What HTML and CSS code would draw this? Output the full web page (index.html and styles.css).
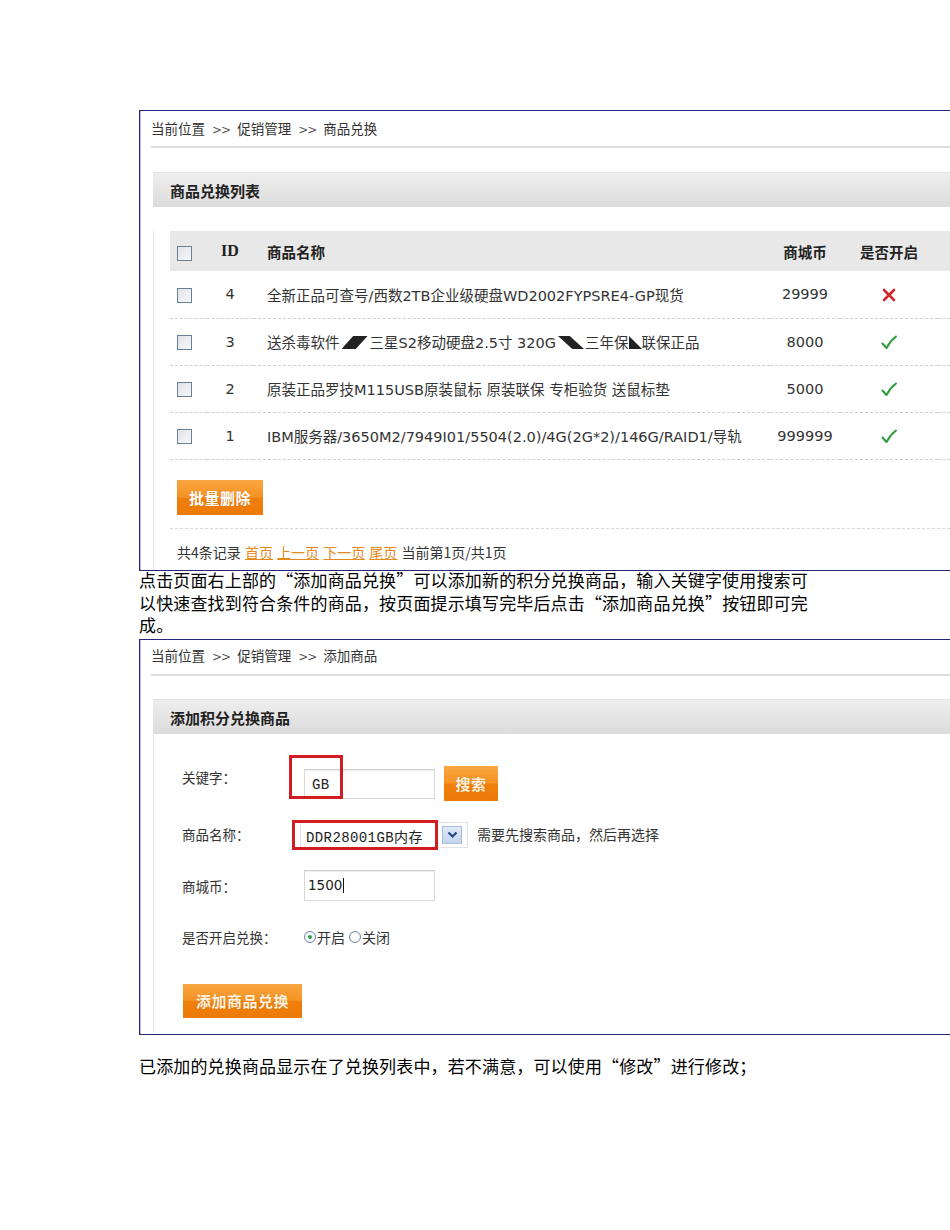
FILE: index.html
```html
<!DOCTYPE html>
<html lang="zh-CN">
<head>
<meta charset="utf-8">
<title>商品兑换</title>
<link rel="stylesheet" href="styles.css">
</head>
<body>
<div class="page">
  <section class="shot shot-list">
    <div class="crumb">当前位置 <span class="sep">&gt;&gt;</span> 促销管理 <span class="sep">&gt;&gt;</span> 商品兑换</div>
    <div class="panel">
      <div class="panel-head">商品兑换列表</div>
      <div class="panel-body">
        <table class="grid">
          <thead>
            <tr>
              <th class="c-chk"><span class="chk"></span></th>
              <th class="c-id id-head">ID</th>
              <th class="c-name">商品名称</th>
              <th class="c-coin">商城币</th>
              <th class="c-on">是否开启</th>
              <th class="c-more"></th>
            </tr>
          </thead>
          <tbody>
            <tr>
              <td class="c-chk"><span class="chk"></span></td>
              <td class="c-id">4</td>
              <td class="c-name">全新正品可查号/西数2TB企业级硬盘WD2002FYPSRE4-GP现货</td>
              <td class="c-coin">29999</td>
              <td class="c-on"><svg class="ico" width="14" height="14" viewBox="0 0 14 14"><path d="M2 2 L12 12 M12 2 L2 12" stroke="#d4262a" stroke-width="2.6" stroke-linecap="round"/></svg></td>
              <td class="c-more"></td>
            </tr>
            <tr>
              <td class="c-chk"><span class="chk"></span></td>
              <td class="c-id">3</td>
              <td class="c-name">送杀毒软件<span class="tri tri-a"></span>三星S2移动硬盘2.5寸 320G<span class="tri tri-b"></span>三年保<span class="tri tri-c"></span>联保正品</td>
              <td class="c-coin">8000</td>
              <td class="c-on"><svg class="ico" width="16" height="15" viewBox="0 0 16 15"><path d="M1.5 8.5 L5.5 13 C8 8 11 4.5 15 1.5" fill="none" stroke="#2f9a3e" stroke-width="2" stroke-linecap="round" stroke-linejoin="round"/></svg></td>
              <td class="c-more"></td>
            </tr>
            <tr>
              <td class="c-chk"><span class="chk"></span></td>
              <td class="c-id">2</td>
              <td class="c-name">原装正品罗技M115USB原装鼠标 原装联保 专柜验货 送鼠标垫</td>
              <td class="c-coin">5000</td>
              <td class="c-on"><svg class="ico" width="16" height="15" viewBox="0 0 16 15"><path d="M1.5 8.5 L5.5 13 C8 8 11 4.5 15 1.5" fill="none" stroke="#2f9a3e" stroke-width="2" stroke-linecap="round" stroke-linejoin="round"/></svg></td>
              <td class="c-more"></td>
            </tr>
            <tr>
              <td class="c-chk"><span class="chk"></span></td>
              <td class="c-id">1</td>
              <td class="c-name">IBM服务器/3650M2/7949I01/5504(2.0)/4G(2G*2)/146G/RAID1/导轨</td>
              <td class="c-coin">999999</td>
              <td class="c-on"><svg class="ico" width="16" height="15" viewBox="0 0 16 15"><path d="M1.5 8.5 L5.5 13 C8 8 11 4.5 15 1.5" fill="none" stroke="#2f9a3e" stroke-width="2" stroke-linecap="round" stroke-linejoin="round"/></svg></td>
              <td class="c-more"></td>
            </tr>
          </tbody>
        </table>
        <div class="actions"><span class="btn btn-del">批量删除</span></div>
        <div class="pager">共4条记录 <a class="plink">首页</a> <a class="plink">上一页</a> <a class="plink">下一页</a> <a class="plink">尾页</a> 当前第1页/共1页</div>
      </div>
    </div>
  </section>

  <p class="note">点击页面右上部的<span class="q">“</span>添加商品兑换<span class="q">”</span>可以添加新的积分兑换商品，输入关键字使用搜索可<br>以快速查找到符合条件的商品，按页面提示填写完毕后点击<span class="q">“</span>添加商品兑换<span class="q">”</span>按钮即可完<br>成。</p>

  <section class="shot shot-form">
    <div class="crumb crumb-2">当前位置 <span class="sep">&gt;&gt;</span> 促销管理 <span class="sep">&gt;&gt;</span> 添加商品</div>
    <div class="panel panel-2">
      <div class="panel-head">添加积分兑换商品</div>
      <div class="panel-body form-body">
        <div class="frow frow-1">
          <div class="flabel">关键字：</div>
          <div class="field field-kw">
            <span class="val val-mono">GB</span>
            <span class="hl hl-kw"></span>
          </div>
          <span class="btn btn-search">搜索</span>
        </div>
        <div class="frow frow-2">
          <div class="flabel">商品名称：</div>
          <div class="select">
            <span class="val val-mono">DDR28001GB内存</span>
            <span class="arrow"><svg width="11" height="8" viewBox="0 0 11 8"><path d="M1.5 1.5 L5.5 5.5 L9.5 1.5" fill="none" stroke="#23468a" stroke-width="2.2"/></svg></span>
            <span class="hl hl-sel"></span>
          </div>
          <div class="hint">需要先搜索商品，然后再选择</div>
        </div>
        <div class="frow frow-3">
          <div class="flabel">商城币：</div>
          <div class="field field-coin"><span class="val">1500</span><span class="caret"></span></div>
        </div>
        <div class="frow frow-4">
          <div class="flabel">是否开启兑换：</div>
          <div class="radios">
            <span class="radio on"></span><span class="rtext">开启</span>
            <span class="radio"></span><span class="rtext">关闭</span>
          </div>
        </div>
        <span class="btn btn-add">添加商品兑换</span>
      </div>
    </div>
  </section>

  <p class="note note-2">已添加的兑换商品显示在了兑换列表中，若不满意，可以使用<span class="q">“</span>修改<span class="q">”</span>进行修改；</p>
</div>
</body>
</html>
```

FILE: styles.css
```css
* { box-sizing: border-box; }
html, body { margin: 0; padding: 0; background: #fff; }
body {
  width: 950px;
  overflow: hidden;
  font-family: "Noto Sans CJK SC", sans-serif;
  color: #000;
}
.page {
  padding: 110px 0 0 139px;
}

/* screenshot boxes */
.shot {
  width: 811px;
  border: 1px solid #25257e;
  border-right: none;
  background: #fff;
  overflow: hidden;
  box-shadow: inset 1px 0 0 #b9b9e6;
}
.shot-list { height: 461px; }
.shot-form { height: 396px; }

.crumb {
  margin-left: 11px;
  height: 37px;
  line-height: 34px;
  border-bottom: 2px solid #dedede;
  font-size: 13.5px;
  color: #333;
  white-space: nowrap;
}
.crumb .sep {
  display: inline-block;
  margin: 0 4px;
  font-family: "DejaVu Sans", sans-serif;
  font-size: 12px;
  letter-spacing: -1px;
  color: #555;
}
.crumb-2 {
  height: 36px;
  line-height: 30px;
}

.panel {
  margin: 24px 0 0 13px;
}
.panel-2 { margin-top: 23px; }
.panel-head {
  height: 35px;
  line-height: 35px;
  padding-left: 17px;
  font-size: 15px;
  font-weight: 700;
  color: #222;
  background: linear-gradient(#eeeeee, #dcdcdc);
  border-top: 1px solid #e2e2e2;
}
.panel-body {
  border-left: 1px solid #e6e6e6;
  height: 400px;
}

/* table */
.grid {
  margin: 24px 0 0 16px;
  border-collapse: collapse;
  table-layout: fixed;
  width: 780px;
  font-family: "DejaVu Sans", "Noto Sans CJK SC", sans-serif;
  font-size: 14.5px;
  color: #333;
}
.grid th {
  height: 40px;
  background: #e8e8e8;
  font-family: "Noto Sans CJK SC", sans-serif;
  font-weight: 700;
  font-size: 14.5px;
  color: #222;
  padding: 0;
}
.grid td {
  height: 47px;
  border-bottom: 1px dashed #d0d0d0;
  padding: 0;
  white-space: nowrap;
}
.c-chk { width: 37px; padding-left: 7px !important; text-align: left; }
.c-id { width: 46px; text-align: center; }
.id-head { font-family: "Liberation Serif", serif !important; font-size: 16px !important; }
.c-name { width: 517px; text-align: left; padding-left: 14px !important; overflow: hidden; }
.c-coin { width: 70px; text-align: center; }
.c-on { width: 98px; text-align: center; }
.c-more { width: 12px; }
.ico { vertical-align: middle; }

.chk {
  display: inline-block;
  width: 15px;
  height: 15px;
  border: 1px solid #6b7f92;
  background: linear-gradient(135deg, #dfe3e8, #f8f8f8);
  vertical-align: middle;
}

.tri {
  display: inline-block;
  width: 0;
  height: 0;
  vertical-align: -1px;
}
.tri-a {
  width: 26px;
  height: 13px;
  margin: 0 2px;
  background: #222;
  clip-path: polygon(45% 0, 100% 0, 55% 100%, 0 100%);
}
.tri-b {
  width: 26px;
  height: 13px;
  margin: 0 1px 0 2px;
  background: #222;
  clip-path: polygon(0 0, 45% 0, 100% 100%, 55% 100%);
}
.tri-c {
  border-bottom: 13px solid #222;
  border-right: 13px solid transparent;
}

/* buttons */
.btn {
  display: inline-block;
  color: #fff;
  font-weight: 700;
  font-size: 15px;
  text-align: center;
  background: linear-gradient(#f9a641 0%, #f59324 48%, #ef7f0c 52%, #ee7a08 100%);
  letter-spacing: 0.5px;
  text-shadow: 0 0 1px rgba(180, 80, 0, 0.5);
}
.actions {
  margin-left: 16px;
  padding: 20px 0 13px 7px;
  border-bottom: 1px dashed #d8d8d8;
  width: 780px;
}
.btn-del {
  width: 86px;
  height: 35px;
  line-height: 35px;
  vertical-align: top;
}
.pager {
  margin-left: 23px;
  padding-top: 12px;
  line-height: 22px;
  font-size: 14px;
  word-spacing: 1px;
  color: #333;
  white-space: nowrap;
}
.plink {
  color: #e4891c;
  text-decoration: underline;
}

/* notes */
.note {
  margin: 0;
  height: 67.5px;
  font-family: "Liberation Sans", "Noto Sans CJK SC", sans-serif;
  font-size: 17px;
  line-height: 22.5px;
  letter-spacing: 0.15px;
  white-space: nowrap;
}
.note .q {
  font-family: "Noto Sans CJK SC", sans-serif;
  line-height: 0;
}
.note-2 { margin-top: 22px; height: 22.5px; }

/* form */
.form-body {
  padding: 19px 0 15px 28px;
  height: auto;
}
.frow {
  display: flex;
  align-items: flex-start;
}
.flabel {
  width: 122px;
  line-height: 20px;
  font-size: 13.5px;
  color: #333;
}
.frow-1 { height: 54px; }
.frow-1 .flabel { margin-top: 14px; }
.frow-2 { height: 54px; }
.frow-2 .flabel { margin-top: 17px; }
.frow-3 { height: 50px; }
.frow-3 .flabel { margin-top: 15px; }
.frow-4 { height: 52px; }
.frow-4 .flabel { margin-top: 16px; }

.field {
  position: relative;
  width: 131px;
  height: 30px;
  border: 1px solid #d8d8d8;
  border-top-color: #cfcfcf;
  background: #fff;
  box-shadow: inset 0 1px 1px #eee;
}
.field-kw { margin-top: 16px; }
.field-coin { margin-top: 9px; height: 31px; display: flex; align-items: center; }
.val {
  display: inline-block;
  padding-left: 7px;
  line-height: 28px;
  font-family: "DejaVu Sans", "Noto Sans CJK SC", sans-serif;
  font-size: 13.5px;
  color: #222;
}
.val-mono {
  font-family: "Liberation Mono", "Noto Sans CJK SC", monospace;
  font-size: 14px;
  letter-spacing: 0.4px;
}
.field-coin .val { padding-left: 3px; }
.caret {
  display: inline-block;
  width: 1px;
  height: 15px;
  background: #111;
  margin-left: 1px;
}
.hl {
  position: absolute;
  border: 3px solid #d11d22;
}
.hl-kw {
  left: -16px;
  top: -15px;
  width: 54px;
  height: 44px;
}
.btn-search {
  margin: 13px 0 0 9px;
  width: 54px;
  height: 35px;
  line-height: 35px;
  font-size: 15px;
  color: #fff2df;
}

.select {
  position: relative;
  margin: 15px 0 0 -4px;
  width: 168px;
  height: 26px;
  border: 1px solid #e2e2e2;
  background: #fff;
}
.select .val {
  padding-left: 5px;
  line-height: 24px;
}
.arrow {
  position: absolute;
  left: 141px;
  top: 3px;
  width: 20px;
  height: 18px;
  border: 1px solid #a9bddb;
  background: linear-gradient(#dfe9f8, #c2d4ee);
  display: flex;
  align-items: center;
  justify-content: center;
}
.hl-sel {
  left: -9px;
  top: -3px;
  width: 146px;
  height: 30px;
}
.hint {
  margin: 17px 0 0 9px;
  line-height: 20px;
  font-size: 14px;
  color: #333;
}

.radios {
  margin-top: 16px;
  display: flex;
  align-items: center;
  height: 20px;
  font-size: 14px;
  color: #333;
}
.radio {
  display: inline-block;
  width: 12px;
  height: 12px;
  border-radius: 50%;
  border: 1px solid #6f86a8;
  background: radial-gradient(circle, #fff 40%, #e3e8ef 100%);
  position: relative;
}
.radio.on::after {
  content: "";
  position: absolute;
  left: 3px;
  top: 3px;
  width: 4px;
  height: 4px;
  border-radius: 50%;
  background: #2ea043;
}
.rtext { margin: 0 4px 0 1px; }

.btn-add {
  margin: 21px 0 0 1px;
  width: 119px;
  height: 34px;
  line-height: 34px;
  font-size: 15px;
  color: #fff2df;
}
```
